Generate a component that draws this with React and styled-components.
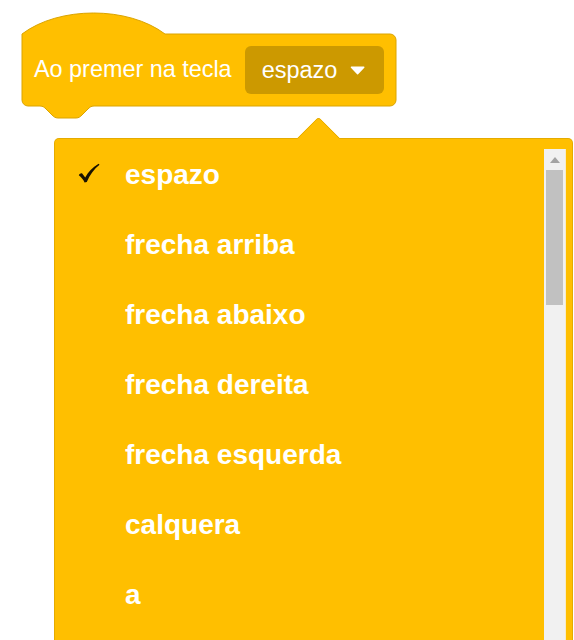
import React from "react";
import styled, { createGlobalStyle } from "styled-components";

const GlobalStyle = createGlobalStyle`
  html, body {
    margin: 0;
    padding: 0;
    background: #ffffff;
    overflow: hidden;
  }
  body {
    font-family: "Liberation Sans", Arial, sans-serif;
  }
`;

const Page = styled.div`
  width: 574px;
  height: 640px;
  overflow: hidden;
  padding-top: 34px;
  box-sizing: border-box;
`;

const Block = styled.div`
  position: relative;
  margin-left: 22px;
  width: 374px;
  height: 72px;
`;

const BlockShape = styled.svg`
  position: absolute;
  left: -1px;
  top: -23px;
  width: 376px;
  height: 110px;
  overflow: visible;
`;

const BlockContent = styled.div`
  position: relative;
  height: 100%;
  display: flex;
  align-items: center;
  gap: 13px;
  padding-left: 12px;
`;

const Label = styled.span`
  color: #ffffff;
  font-size: 23.4px;
  line-height: 1;
  white-space: nowrap;
`;

const Field = styled.div`
  display: flex;
  align-items: center;
  gap: 13px;
  box-sizing: border-box;
  width: 139px;
  height: 48px;
  padding: 0 18px 0 17px;
  border-radius: 6px;
  background: #cc9900;
  color: #ffffff;
  font-size: 23.5px;
`;

const Menu = styled.div`
  position: relative;
  display: flex;
  box-sizing: border-box;
  margin-top: 32px;
  margin-left: 54px;
  width: 519px;
  height: 520px;
  padding-right: 6px;
  background: #ffbf00;
  border: 1px solid rgba(0, 0, 0, 0.1);
  border-radius: 5px;
`;

const MenuArrow = styled.div`
  position: absolute;
  top: -16px;
  left: 248px;
  width: 30px;
  height: 30px;
  background: #ffbf00;
  border-top: 1px solid rgba(0, 0, 0, 0.1);
  border-left: 1px solid rgba(0, 0, 0, 0.1);
  border-top-left-radius: 4px;
  transform: rotate(45deg);
`;

const List = styled.div`
  flex: 1;
  padding-top: 1px;
  overflow: hidden;
`;

const Item = styled.div`
  display: flex;
  align-items: center;
  height: 70px;
  color: #ffffff;
  font-size: 28px;
  font-weight: bold;
  white-space: nowrap;
`;

const CheckSlot = styled.span`
  display: flex;
  align-items: center;
  width: 70px;
  height: 24px;
  box-sizing: border-box;
  padding-left: 23px;
  margin-top: -4px;
`;

const Track = styled.div`
  display: flex;
  flex-direction: column;
  align-items: center;
  margin-top: 10px;
  width: 21px;
  background: #f1f1f1;
  border-right: 1px solid #f6ecc9;
`;

const ScrollButton = styled.div`
  display: flex;
  align-items: center;
  justify-content: center;
  height: 21px;
  width: 100%;
`;

const Thumb = styled.div`
  width: 17px;
  height: 135px;
  background: #c1c1c1;
`;

const items = [
  "espazo",
  "frecha arriba",
  "frecha abaixo",
  "frecha dereita",
  "frecha esquerda",
  "calquera",
  "a",
];

const Check = () => (
  <svg width="22" height="20" viewBox="0 0 22 20">
    <path
      d="M 0.8 12.2 C 1.8 10.6 3.2 9.9 4.2 10.6 L 7.2 14.4 C 10.2 9 14.2 4.4 20.6 0.8 L 21.5 1.8 C 16 6.2 11.6 12.2 8.8 19 L 6.6 19.4 C 5.2 16.4 3.2 14 0.8 12.2 Z"
      fill="#1a1200"
    />
  </svg>
);

export default function App() {
  return (
    <>
      <GlobalStyle />
      <Page>
        <Block>
          <BlockShape viewBox="-1 -23 376 110">
            <path
              d="M 0 0 C 37 -28, 106 -28, 143 0 L 368 0 A 6 6 0 0 1 374 6 L 374 66 A 6 6 0 0 1 368 72 L 72 72 c -3 0 -4.5 1.5 -6 3 l -6 6 c -1.5 1.5 -3 3 -6 3 h -18 c -3 0 -4.5 -1.5 -6 -3 l -6 -6 c -1.5 -1.5 -3 -3 -6 -3 L 6 72 A 6 6 0 0 1 0 66 Z"
              fill="#ffbf00"
              stroke="#dba400"
              strokeWidth="1"
            />
          </BlockShape>
          <BlockContent>
            <Label>Ao premer na tecla</Label>
            <Field>
              <span>espazo</span>
              <svg width="16" height="9" viewBox="0 0 16 9">
                <path
                  d="M 1.5 1 L 14.5 1 L 8 8 Z"
                  fill="#ffffff"
                  stroke="#ffffff"
                  strokeWidth="1.5"
                  strokeLinejoin="round"
                />
              </svg>
            </Field>
          </BlockContent>
        </Block>
        <Menu>
          <MenuArrow />
          <List>
            {items.map((it, i) => (
              <Item key={it}>
                <CheckSlot>{i === 0 ? <Check /> : null}</CheckSlot>
                {it}
              </Item>
            ))}
          </List>
          <Track>
            <ScrollButton>
              <svg width="10" height="6" viewBox="0 0 10 6">
                <path d="M 0 6 L 5 0 L 10 6 Z" fill="#a3a3a3" />
              </svg>
            </ScrollButton>
            <Thumb />
          </Track>
        </Menu>
      </Page>
    </>
  );
}
